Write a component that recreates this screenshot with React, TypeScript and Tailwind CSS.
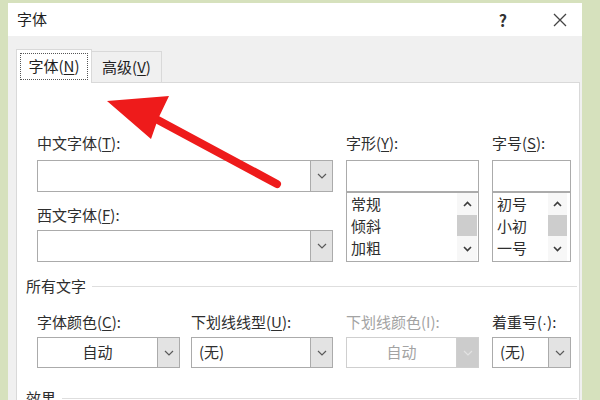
import React from 'react'

function Chevron({ color = '#5a5a5a' }: { color?: string }) {
  return (
    <svg width="10" height="6" viewBox="0 0 10 6">
      <path d="M1 1l4 4 4-4" fill="none" stroke={color} strokeWidth="1.2" />
    </svg>
  )
}

function Mn({ children }: { children: React.ReactNode }) {
  return <span className="underline underline-offset-2 decoration-1">{children}</span>
}

function Combo({
  className = '',
  value,
  center,
  disabled,
}: {
  className?: string
  value?: string
  center?: boolean
  disabled?: boolean
}) {
  return (
    <div
      className={`flex bg-white border ${disabled ? 'border-[#cfcfcf]' : 'border-[#ababab]'} ${className}`}
    >
      <div
        className={`flex-1 flex items-center text-[15px] ${center ? 'justify-center' : 'pl-[7px]'} ${disabled ? 'text-[#a3a3a3]' : 'text-[#2e2e2e]'}`}
      >
        {value}
      </div>
      <div
        className={`w-[22px] flex items-center justify-center border-l ${disabled ? 'bg-[#cccccc] border-[#cfcfcf]' : 'bg-[#e3e3e3] border-[#ababab]'}`}
      >
        <Chevron color={disabled ? '#e2e2e2' : '#5a5a5a'} />
      </div>
    </div>
  )
}

function ScrollArrow({ up }: { up?: boolean }) {
  return (
    <svg width="9" height="6" viewBox="0 0 9 6">
      <path
        d={up ? 'M1 5l3.5-3.5L8 5' : 'M1 1l3.5 3.5L8 1'}
        fill="none"
        stroke="#3c3c3c"
        strokeWidth="1.6"
      />
    </svg>
  )
}

function ListBox({ items, barClass }: { items: string[]; barClass: string }) {
  return (
    <div className="h-[70px] border border-[#ababab] bg-white flex">
      <div className="flex-1 pl-[4px] text-[15px] leading-[22px] text-[#2e2e2e]">
        {items.map((it) => (
          <div key={it}>{it}</div>
        ))}
      </div>
      <div className={`flex flex-col items-center bg-[#f7f7f7] ${barClass}`}>
        <div className="h-[22px] flex items-center justify-center">
          <ScrollArrow up />
        </div>
        <div className="w-full h-[21px] bg-[#cdcdcd]" />
        <div className="flex-1 flex items-center justify-center">
          <ScrollArrow />
        </div>
      </div>
    </div>
  )
}

function Label({ className = '', disabled, children }: { className?: string; disabled?: boolean; children: React.ReactNode }) {
  return (
    <div className={`h-5 leading-5 text-[15px] whitespace-nowrap ${disabled ? 'text-[#a3a3a3]' : 'text-[#2e2e2e]'} ${className}`}>
      {children}
    </div>
  )
}

function Section({ title, className = '' }: { title: string; className?: string }) {
  return (
    <div className={`flex items-center h-5 pl-[9px] pr-[2px] ${className}`}>
      <span className="text-[15px] leading-5 text-[#2e2e2e]">{title}</span>
      <div className="flex-1 h-px bg-[#dedede] ml-[6px]" />
    </div>
  )
}

export default function App() {
  return (
    <div className="relative w-[600px] h-[400px] overflow-hidden bg-[#d6e1bd] font-['Noto_Sans_CJK_SC','Liberation_Sans',sans-serif]">
      <div className="ml-[8px] mt-[3px] w-[574px] h-[397px] bg-[#f0f0f0] flex flex-col">
        {/* title bar */}
        <div className="h-[33px] shrink-0 bg-white flex items-center pl-[9px] text-[15px] text-[#1f1f1f]">
          <span>字体</span>
          <span className="ml-auto mr-[46px] text-[16px] font-semibold text-[#333]">?</span>
          <svg width="14" height="14" viewBox="0 0 14 14" className="mr-[15px]">
            <path d="M1 1l12 12M13 1L1 13" stroke="#444" strokeWidth="1.3" />
          </svg>
        </div>

        {/* tabs */}
        <div className="h-[46px] shrink-0 flex items-end pl-[8px]">
          <div className="relative z-10 -mb-px w-[76px] h-[34px] bg-white border border-b-0 border-[#d9d9d9] p-[3px]">
            <div className="h-full border border-dotted border-[#555] flex items-center justify-center text-[15px] text-[#1f1f1f]">
              字体(<Mn>N</Mn>)
            </div>
          </div>
          <div className="w-[70px] h-[31px] border border-b-0 border-l-0 border-[#d9d9d9] flex items-center justify-center text-[15px] text-[#1f1f1f]">
            高级(<Mn>V</Mn>)
          </div>
        </div>

        {/* panel */}
        <div className="flex-1 ml-[8px] mr-[2px] bg-white border border-b-0 border-[#d9d9d9]">
          <div className="pt-[50px] pl-[20px] flex items-start">
            <div className="w-[296px]">
              <Label className="mb-[7px]">
                中文字体(<Mn>T</Mn>):
              </Label>
              <Combo className="h-[32px]" />
              <Label className="mt-[13px] mb-[5px]">
                西文字体(<Mn>F</Mn>):
              </Label>
              <Combo className="h-[32px]" />
            </div>
            <div className="ml-[13px] w-[133px]">
              <Label className="mb-[7px]">
                字形(<Mn>Y</Mn>):
              </Label>
              <div className="h-[32px] border border-[#ababab] bg-white" />
              <ListBox items={['常规', '倾斜', '加粗']} barClass="w-[20px] mr-px" />
            </div>
            <div className="ml-[13px] w-[79px]">
              <Label className="mb-[7px]">
                字号(<Mn>S</Mn>):
              </Label>
              <div className="h-[32px] border border-[#ababab] bg-white" />
              <ListBox items={['初号', '小初', '一号']} barClass="w-[19px] mr-[3px]" />
            </div>
          </div>

          <Section title="所有文字" className="mt-[14px]" />

          <div className="mt-[16px] pl-[20px] flex items-start">
            <div className="w-[143px]">
              <Label className="mb-[5px]">
                字体颜色(<Mn>C</Mn>):
              </Label>
              <Combo className="h-[31px]" value="自动" center />
            </div>
            <div className="ml-[11px] w-[142px]">
              <Label className="mb-[5px]">
                下划线线型(<Mn>U</Mn>):
              </Label>
              <Combo className="h-[31px]" value="(无)" />
            </div>
            <div className="ml-[13px] w-[133px]">
              <Label className="mb-[5px]" disabled>
                下划线颜色(I):
              </Label>
              <Combo className="h-[31px]" value="自动" center disabled />
            </div>
            <div className="ml-[13px] w-[79px]">
              <Label className="mb-[5px]">
                着重号(<span className="font-['Liberation_Sans',sans-serif]">·</span>):
              </Label>
              <Combo className="h-[31px]" value="(无)" />
            </div>
          </div>

          <Section title="效果" className="mt-[20px]" />
        </div>
      </div>

      {/* red annotation arrow */}
      <svg className="absolute inset-0 pointer-events-none" width="600" height="400" viewBox="0 0 600 400">
        <line x1="156" y1="119" x2="277" y2="184" stroke="#ee1b1b" strokeWidth="8" strokeLinecap="round" />
        <polygon points="107,101 169,96 158,119 151,139" fill="#ee1b1b" />
      </svg>
    </div>
  )
}
